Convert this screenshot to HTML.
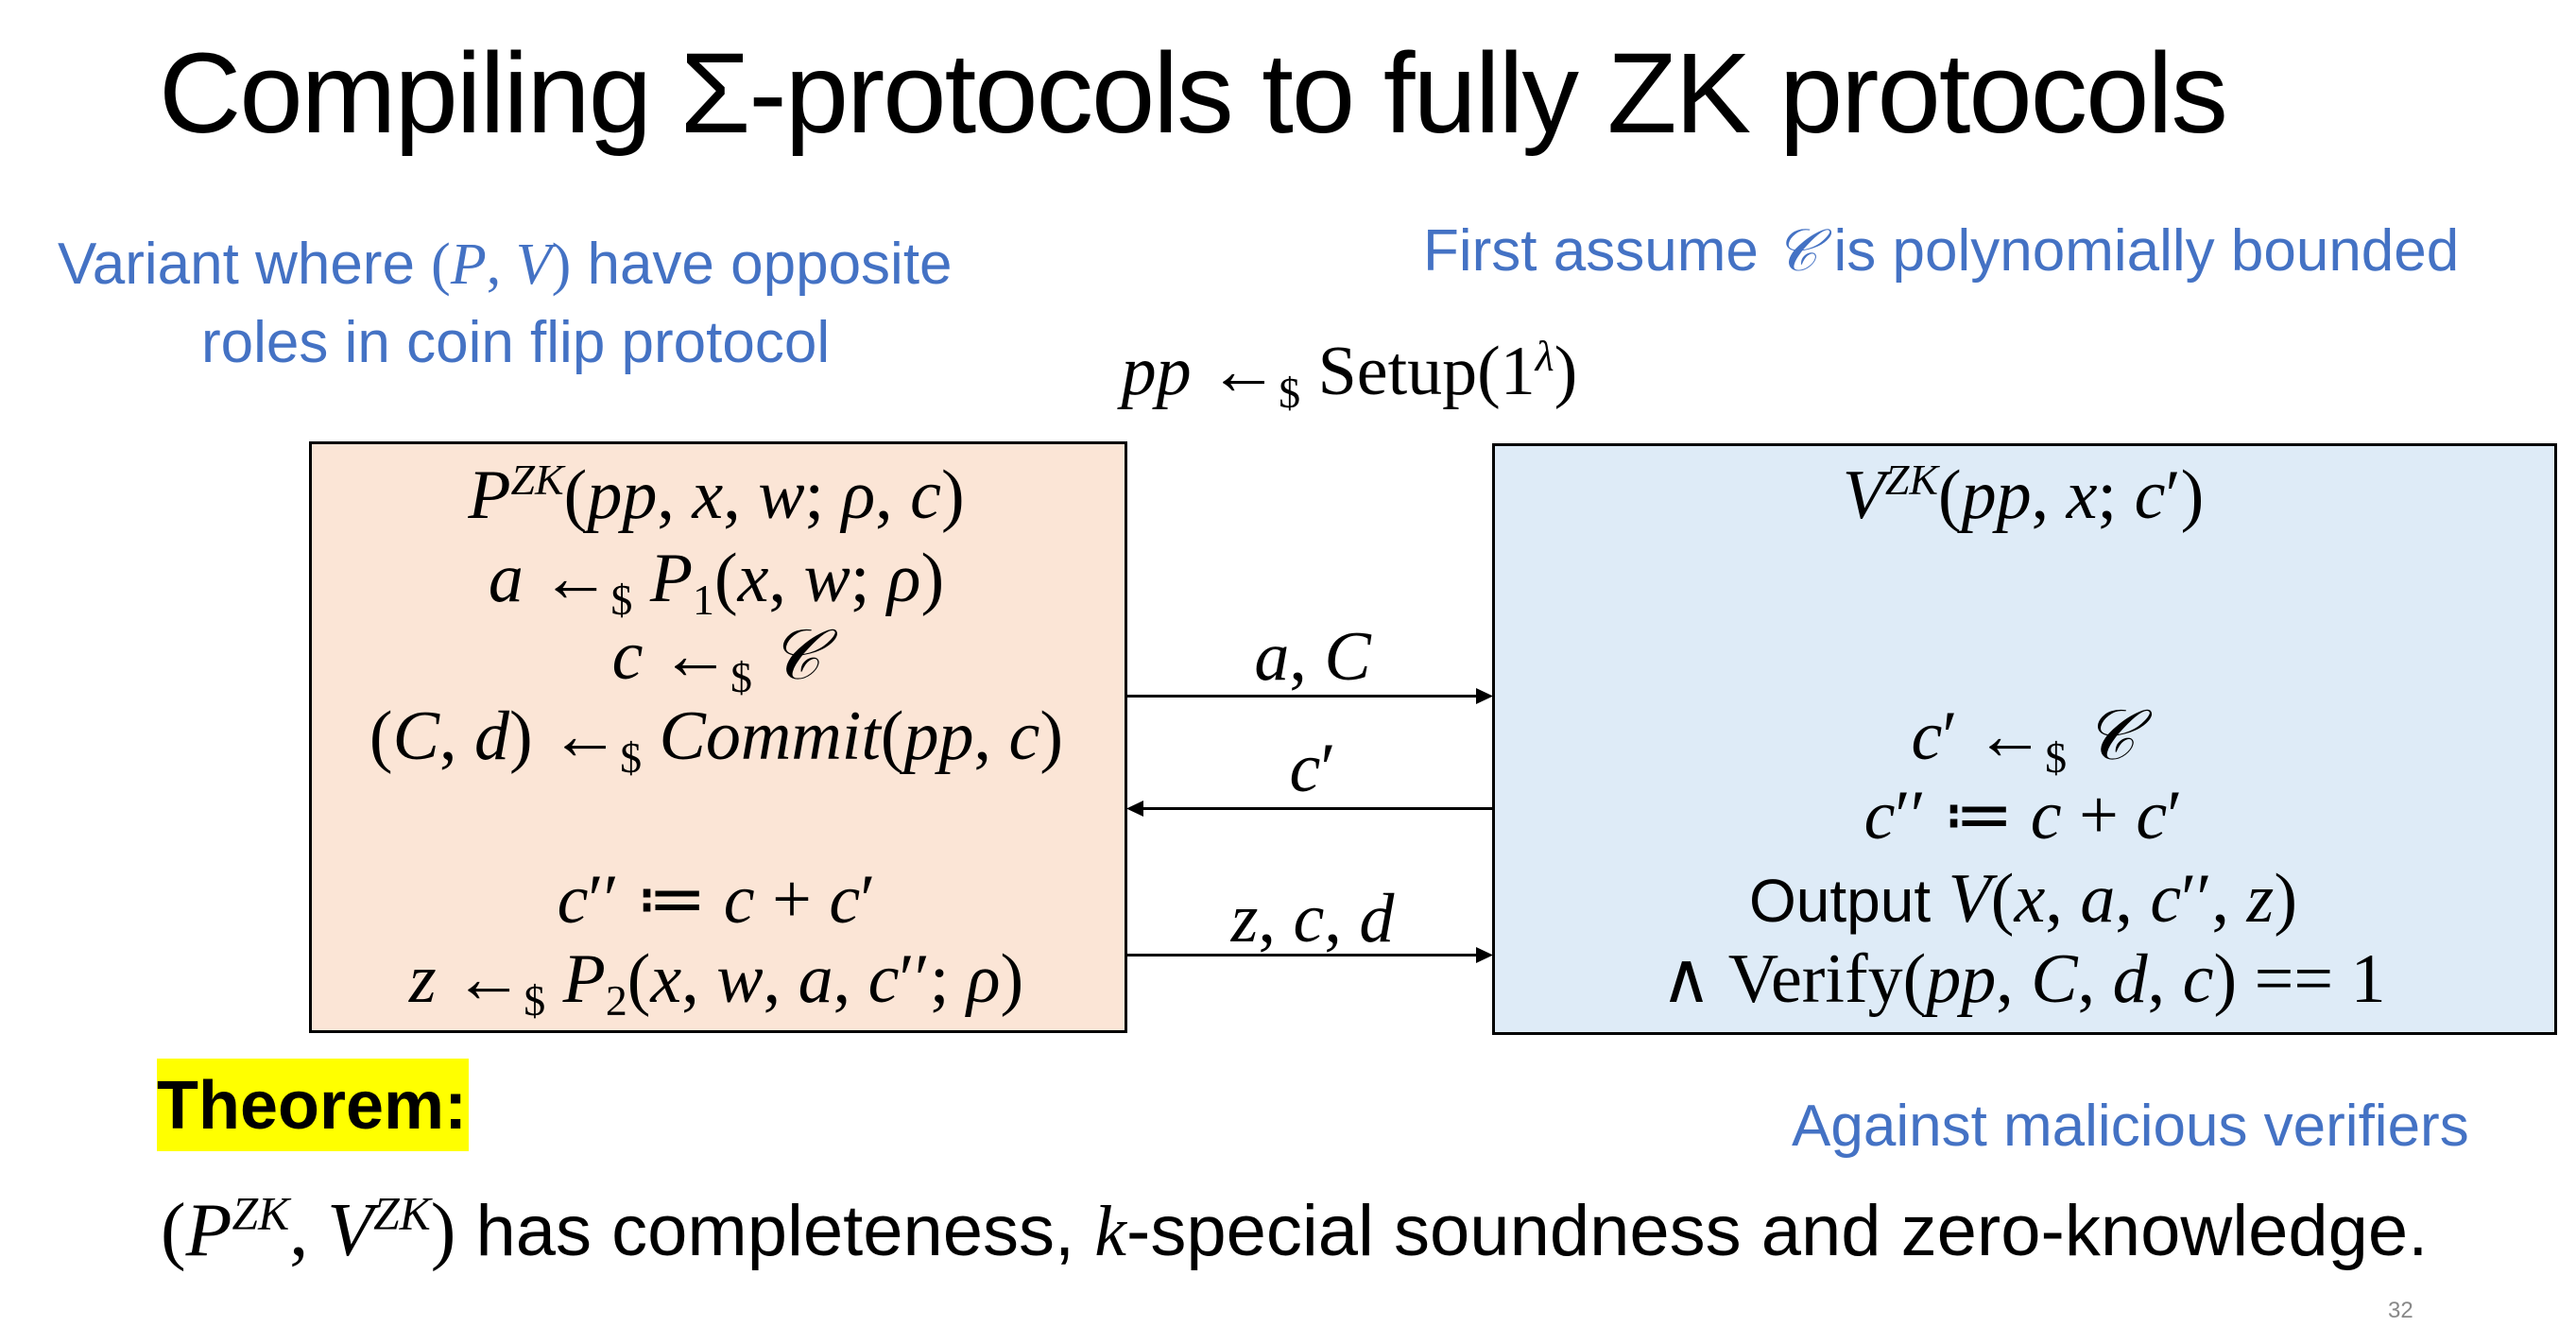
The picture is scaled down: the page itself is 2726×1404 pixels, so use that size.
<!DOCTYPE html>
<html><head><meta charset="utf-8"><style>
body{margin:0;width:2726px;height:1404px;background:#fff;position:relative;overflow:hidden;font-family:"Liberation Sans",sans-serif;}
.a{position:absolute;white-space:nowrap;}
.c{position:absolute;white-space:nowrap;text-align:center;transform:translateX(-50%);}
.m{font-family:"Liberation Serif",serif;font-size:74px;line-height:74px;}
.m i{font-style:italic;}
.blue{color:#4472c4;font-size:62px;line-height:62px;}
sup{font-size:0.62em;vertical-align:0.55em;line-height:0;}
sub{font-size:0.62em;vertical-align:-0.3em;line-height:0;}
.box{position:absolute;border:3px solid #000;box-sizing:border-box;}
.arr{position:absolute;height:3px;background:#000;}
</style></head><body>
<div class="a" style="left:168px;top:38px;font-size:121px;line-height:121px;letter-spacing:-2px;">Compiling Σ-protocols to fully ZK protocols</div>

<div class="a blue" style="left:61px;top:249px;">Variant where <span style="font-family:'Liberation Serif',serif">(<i>P</i>, <i>V</i>)</span> have opposite</div>
<div class="a blue" style="left:213px;top:332px;">roles in coin flip protocol</div>
<div class="a blue" style="left:1506px;top:235px;">First assume <span style="font-family:'Liberation Serif',serif"><i>𝒞</i></span> is polynomially bounded</div>

<div class="c m" style="left:1428px;top:356px;"><i>pp</i> ←<sub>$</sub> Setup(1<sup><i>λ</i></sup>)</div>

<div class="box" style="left:327px;top:467px;width:866px;height:626px;background:#fbe5d6;"></div>
<div class="box" style="left:1579px;top:469px;width:1127px;height:626px;background:#deebf7;"></div>

<div class="c m" style="left:758px;top:487px;"><i>P</i><sup><i>ZK</i></sup>(<i>pp</i>, <i>x</i>, <i>w</i>; <i>ρ</i>, <i>c</i>)</div>
<div class="c m" style="left:758px;top:575px;"><i>a</i> ←<sub>$</sub> <i>P</i><sub>1</sub>(<i>x</i>, <i>w</i>; <i>ρ</i>)</div>
<div class="c m" style="left:758px;top:657px;"><i>c</i> ←<sub>$</sub> <i>𝒞</i></div>
<div class="c m" style="left:758px;top:742px;">(<i>C</i>, <i>d</i>) ←<sub>$</sub> <i>Commit</i>(<i>pp</i>, <i>c</i>)</div>
<div class="c m" style="left:758px;top:915px;"><i>c</i>′′ ≔ <i>c</i> + <i>c</i>′</div>
<div class="c m" style="left:758px;top:999px;"><i>z</i> ←<sub>$</sub> <i>P</i><sub>2</sub>(<i>x</i>, <i>w</i>, <i>a</i>, <i>c</i>′′; <i>ρ</i>)</div>

<div class="c m" style="left:2141px;top:487px;"><i>V</i><sup><i>ZK</i></sup>(<i>pp</i>, <i>x</i>; <i>c</i>′)</div>
<div class="c m" style="left:2141px;top:742px;"><i>c</i>′ ←<sub>$</sub> <i>𝒞</i></div>
<div class="c m" style="left:2141px;top:826px;"><i>c</i>′′ ≔ <i>c</i> + <i>c</i>′</div>
<div class="c m" style="left:2141px;top:914px;"><span style="font-family:'Liberation Sans',sans-serif;font-size:64px">Output</span> <i>V</i>(<i>x</i>, <i>a</i>, <i>c</i>′′, <i>z</i>)</div>
<div class="c m" style="left:2141px;top:999px;">∧ Verify(<i>pp</i>, <i>C</i>, <i>d</i>, <i>c</i>) == 1</div>

<div class="arr" style="left:1192px;top:735px;width:376px;"></div>
<svg class="a" style="left:1562px;top:728px" width="18" height="17"><path d="M0 0L18 8.5L0 17Z"/></svg>
<div class="c m" style="left:1389px;top:658px;"><i>a</i>, <i>C</i></div>

<div class="arr" style="left:1204px;top:854px;width:376px;"></div>
<svg class="a" style="left:1192px;top:847px" width="18" height="17"><path d="M18 0L0 8.5L18 17Z"/></svg>
<div class="c m" style="left:1389px;top:776px;"><i>c</i>′</div>

<div class="arr" style="left:1192px;top:1009px;width:376px;"></div>
<svg class="a" style="left:1562px;top:1002px" width="18" height="17"><path d="M0 0L18 8.5L0 17Z"/></svg>
<div class="c m" style="left:1389px;top:935px;"><i>z</i>, <i>c</i>, <i>d</i></div>

<div class="a" style="left:166px;top:1120px;width:330px;height:98px;background:#ffff00;"></div>
<div class="a" style="left:166px;top:1134px;font-size:72px;line-height:72px;font-weight:bold;">Theorem:</div>
<div class="a blue" style="left:1896px;top:1161px;">Against malicious verifiers</div>
<div class="a" style="left:170px;top:1264px;font-size:76px;line-height:76px;"><span style="font-family:'Liberation Serif',serif;font-size:80px">(<i>P</i><sup><i>ZK</i></sup>, <i>V</i><sup><i>ZK</i></sup>)</span> has completeness, <span style="font-family:'Liberation Serif',serif"><i>k</i></span>-special soundness and zero-knowledge.</div>
<div class="a" style="left:2527px;top:1373px;font-size:24px;color:#888;">32</div>
</body></html>
